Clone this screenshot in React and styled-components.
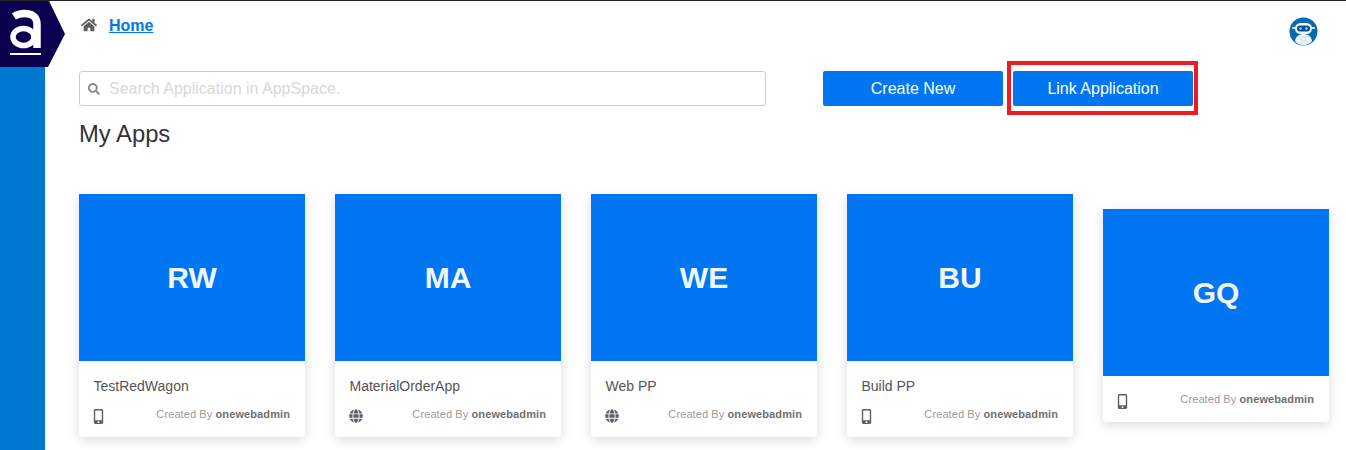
import React from 'react';
import styled, {createGlobalStyle} from 'styled-components';
import {FaHome, FaSearch, FaMobileAlt, FaGlobe} from 'react-icons/fa';

const GlobalStyles = createGlobalStyle`
html, body {
  margin: 0;
  padding: 0;
  height: 100%;
  overflow: hidden;
  background: #fff;
}
* { box-sizing: border-box; }
body {
  font-family: "Liberation Sans", Arial, sans-serif;
}
`;

const Page = styled.div`
display: flex;
height: 100vh;
border-top: 1px solid #222;
position: relative;
`;

const Sidebar = styled.aside`
width: 45px;
flex-shrink: 0;
background: #0077cf;
`;

const LogoWrap = styled.div`
position: absolute;
top: 0;
left: 0;
width: 65px;
height: 66px;
`;

const Main = styled.main`
flex: 1;
padding: 0 17px 0 34px;
min-width: 0;
`;

const TopBar = styled.div`
display: flex;
justify-content: space-between;
height: 70px;
`;

const Crumb = styled.div`
display: flex;
align-items: flex-start;
gap: 12px;
padding: 16px 0 0 2px;
color: #5f5f5f;
font-size: 16px;
`;

const HomeLink = styled.a`
color: #0076f0;
font-weight: bold;
font-size: 16px;
line-height: 18px;
text-decoration: underline;
`;

const Robot = styled.div`
margin: 16px 11px 0 0;
width: 29px;
height: 29px;
`;

const ActionRow = styled.div`
display: flex;
height: 35px;
`;

const SearchBox = styled.div`
width: 687px;
height: 35px;
display: flex;
align-items: center;
gap: 9px;
padding-left: 8px;
border: 1px solid #ccc;
border-radius: 3px;
color: #8a8a8a;
font-size: 12px;
`;

const SearchText = styled.span`
color: #d8d8d8;
font-size: 16px;
`;

const Button = styled.button`
width: 180px;
height: 35px;
border: none;
border-radius: 2px;
background: #0076f2;
color: #fff;
font-family: inherit;
font-size: 16px;
margin-left: ${p => p.$left}px;
position: relative;
`;

const Highlight = styled.span`
position: absolute;
top: -10px;
left: -6px;
right: -5px;
bottom: -9px;
border: 4px solid #ed1c24;
`;

const Title = styled.h2`
margin: 14px 0 0;
font-size: 23.8px;
line-height: 28px;
font-weight: normal;
color: #333;
`;

const CardRow = styled.div`
display: flex;
align-items: center;
gap: 30px;
margin-top: 46px;
`;

const Card = styled.div`
width: 226px;
flex-shrink: 0;
background: #fff;
border-radius: 0 0 4px 4px;
box-shadow: 0 3px 12px rgba(0, 0, 0, 0.14);
`;

const Thumb = styled.div`
height: 167px;
background: #0076f2;
color: #f2f7fd;
display: flex;
align-items: center;
justify-content: center;
font-size: 30px;
font-weight: bold;
`;

const CardBody = styled.div`
padding: ${p => (p.$named ? '17px 15px 14px' : '16px 15px 14px')};
`;

const AppName = styled.div`
font-size: 14px;
line-height: 16px;
color: #555;
margin-bottom: 13px;
margin-left: -0.5px;
`;

const CardFooter = styled.div`
display: flex;
justify-content: space-between;
align-items: center;
height: 16px;
color: #59606b;
`;

const MobileIcon = styled(FaMobileAlt)`
font-size: 15px;
margin: 2px 0 0 -3px;
`;

const WebIcon = styled(FaGlobe)`
font-size: 14px;
margin: 2px 0 0 -1px;
`;

const Creator = styled.span`
font-size: 11px;
letter-spacing: 0.1px;
color: #9a9a9a;
margin-bottom: 2px;

b {
  color: #6f6f6f;
}
`;

const apps = [
  {code: 'RW', name: 'TestRedWagon', type: 'mobile'},
  {code: 'MA', name: 'MaterialOrderApp', type: 'web'},
  {code: 'WE', name: 'Web PP', type: 'web'},
  {code: 'BU', name: 'Build PP', type: 'mobile'},
  {code: 'GQ', type: 'mobile'},
];

const Logo = () => (
  <svg width="65" height="66" viewBox="0 0 65 66">
    <path d="M0 0H49L65 33L48 66H0Z" fill="#0b0050" />
    <path d="M14 15.500C20 11.500 37 9.500 37 23V47" fill="none" stroke="#fff" strokeWidth="7.500" />
    <ellipse cx="23.500" cy="36" rx="10.500" ry="8.500" fill="none" stroke="#fff" strokeWidth="5.500" />
    <rect x="10" y="52" width="31" height="2" fill="#fff" />
  </svg>
);

const RobotIcon = () => (
  <svg width="29" height="29" viewBox="0 0 29 29">
    <circle cx="14.500" cy="14.500" r="14" fill="#0a6ab0" />
    <path d="M6 24C7 19 10 17 14.500 17S22 19 23 24C20 29.500 9 29.500 6 24Z" fill="#e9f3fb" />
    <rect x="3" y="10" width="23" height="2" rx="1" fill="#cfe6f6" />
    <rect x="6" y="6" width="17" height="11" rx="5.500" fill="#f2f8fc" />
    <rect x="8" y="8.500" width="13" height="6" rx="3" fill="#0f4f8e" />
    <circle cx="11.500" cy="11.500" r="1.200" fill="#9fd4f5" />
    <circle cx="17.500" cy="11.500" r="1.200" fill="#9fd4f5" />
    <circle cx="14.500" cy="22.500" r="2.500" fill="none" stroke="#c4e0f3" strokeWidth="1" />
  </svg>
);

export default function App() {
  return (
    <>
      <GlobalStyles />
      <Page>
        <Sidebar />
        <LogoWrap><Logo /></LogoWrap>
        <Main>
          <TopBar>
            <Crumb>
              <FaHome size={16} />
              <HomeLink href="#">Home</HomeLink>
            </Crumb>
            <Robot><RobotIcon /></Robot>
          </TopBar>
          <ActionRow>
            <SearchBox>
              <FaSearch />
              <SearchText>Search Application in AppSpace.</SearchText>
            </SearchBox>
            <Button $left={57}>Create New</Button>
            <Button $left={10}>
              Link Application
              <Highlight />
            </Button>
          </ActionRow>
          <Title>My Apps</Title>
          <CardRow>
            {apps.map(app => (
              <Card key={app.code}>
                <Thumb>{app.code}</Thumb>
                <CardBody $named={!!app.name}>
                  {app.name && <AppName>{app.name}</AppName>}
                  <CardFooter>
                    {app.type === 'mobile' ? <MobileIcon /> : <WebIcon />}
                    <Creator>Created By <b>onewebadmin</b></Creator>
                  </CardFooter>
                </CardBody>
              </Card>
            ))}
          </CardRow>
        </Main>
      </Page>
    </>
  );
}
